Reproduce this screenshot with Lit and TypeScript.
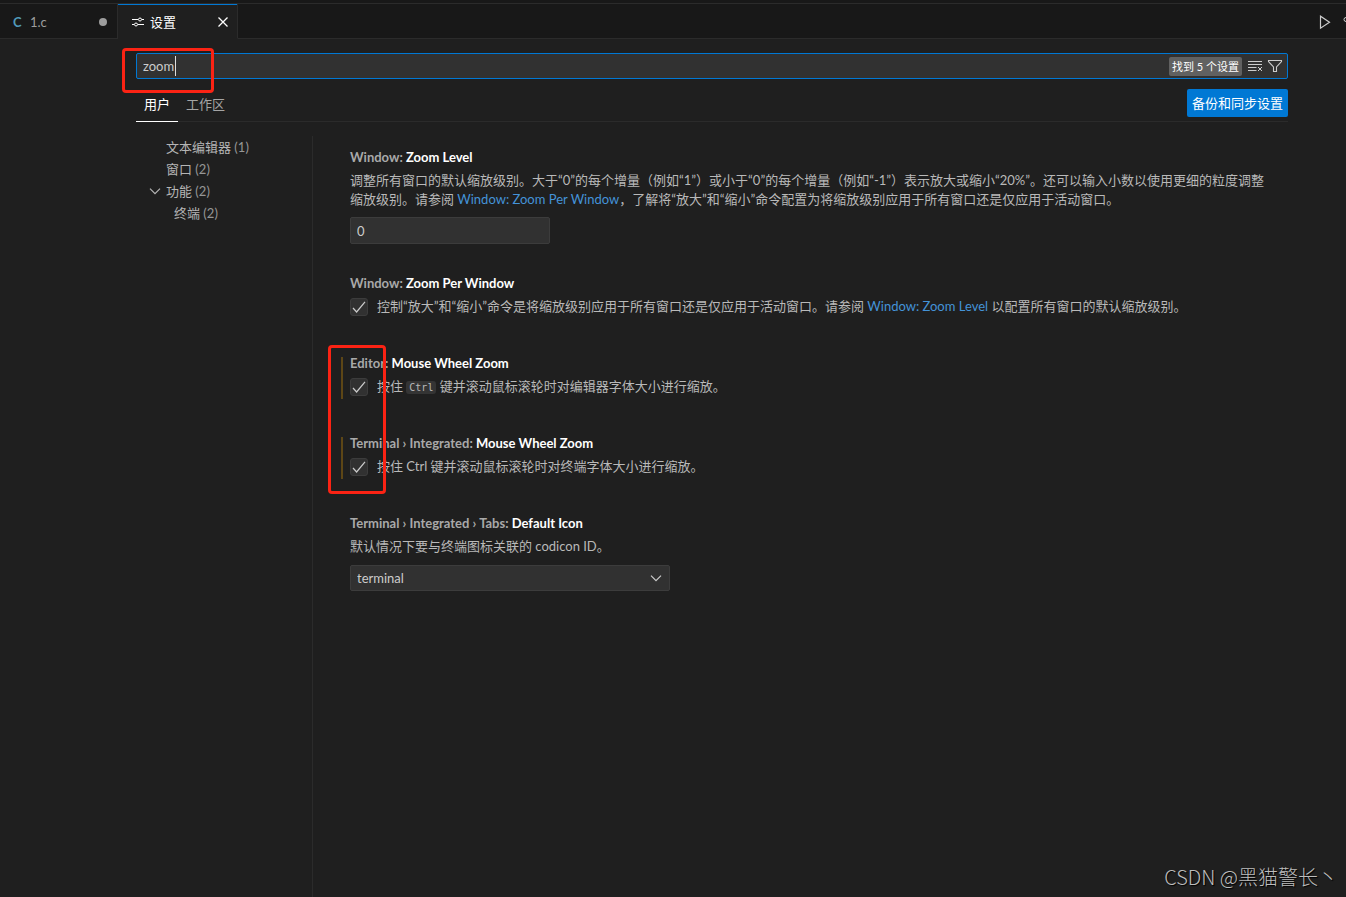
import { LitElement, html, css, svg, nothing, TemplateResult } from "lit";
import { customElement } from "lit/decorators.js";
import { classMap } from "lit/directives/class-map.js";

interface Setting {
  id: string;
  category: string;
  name: string;
  description: TemplateResult;
  kind: "number" | "check" | "select";
  value?: string;
  modified?: boolean;
}

interface TocEntry {
  label: string;
  count: number;
  level: number;
  expanded?: boolean;
}

const TOC: TocEntry[] = [
  { label: "文本编辑器", count: 1, level: 1 },
  { label: "窗口", count: 2, level: 1 },
  { label: "功能", count: 2, level: 1, expanded: true },
  { label: "终端", count: 2, level: 2 },
];

const SETTINGS: Setting[] = [
  {
    id: "zoom-level",
    category: "Window:",
    name: "Zoom Level",
    description: html`调整所有窗口的默认缩放级别。大于“0”的每个增量（例如“1”）或小于“0”的每个增量（例如“-1”）表示放大或缩小“20%”。还可以输入小数以使用更细的粒度调整缩放级别。请参阅 <a href="#zoom-per-window">Window: Zoom Per Window</a>，了解将“放大”和“缩小”命令配置为将缩放级别应用于所有窗口还是仅应用于活动窗口。`,
    kind: "number",
    value: "0",
  },
  {
    id: "zoom-per-window",
    category: "Window:",
    name: "Zoom Per Window",
    description: html`控制“放大”和“缩小”命令是将缩放级别应用于所有窗口还是仅应用于活动窗口。请参阅 <a href="#zoom-level">Window: Zoom Level</a> 以配置所有窗口的默认缩放级别。`,
    kind: "check",
  },
  {
    id: "editor-wheel",
    category: "Editor:",
    name: "Mouse Wheel Zoom",
    description: html`按住 <code>Ctrl</code> 键并滚动鼠标滚轮时对编辑器字体大小进行缩放。`,
    kind: "check",
    modified: true,
  },
  {
    id: "terminal-wheel",
    category: "Terminal › Integrated:",
    name: "Mouse Wheel Zoom",
    description: html`按住 Ctrl 键并滚动鼠标滚轮时对终端字体大小进行缩放。`,
    kind: "check",
    modified: true,
  },
  {
    id: "tabs-icon",
    category: "Terminal › Integrated › Tabs:",
    name: "Default Icon",
    description: html`默认情况下要与终端图标关联的 codicon ID。`,
    kind: "select",
    value: "terminal",
  },
];

const icon = (body: TemplateResult, cls = "") =>
  html`<svg class="icon ${cls}" viewBox="0 0 16 16" width="16" height="16" aria-hidden="true">${body}</svg>`;

const chevron = svg`<path d="M3 5.7 8 10.7 13 5.7" />`;
const check = svg`<path d="M2 9 5.6 13 14 2.8" />`;

@customElement("settings-tabs")
class SettingsTabs extends LitElement {
  static styles = css`
    :host {
      display: flex;
      height: 36px;
      box-sizing: border-box;
      background: #181818;
      border-top: 1px solid #2b2b2b;
    }
    .tab {
      display: flex;
      align-items: center;
      box-sizing: border-box;
      border-right: 1px solid #2b2b2b;
      border-bottom: 1px solid #2b2b2b;
      color: #9d9d9d;
    }
    .file {
      width: 118px;
      padding: 1px 5px 0 13px;
    }
    .lang {
      width: 17px;
      color: #519aba;
      font-weight: 700;
    }
    .active {
      width: 120px;
      padding: 1px 6px 0 12px;
      gap: 4px;
      background: #1f1f1f;
      border-bottom-color: #1f1f1f;
      color: #fff;
      box-shadow: inset 0 1px #0078d4;
    }
    .label {
      flex: 1;
    }
    .rest {
      flex: 1;
      display: flex;
      align-items: center;
      justify-content: flex-end;
      gap: 10px;
      padding-top: 1px;
      border-bottom: 1px solid #2b2b2b;
      overflow: hidden;
    }
    button {
      display: flex;
      padding: 0;
      border: 0;
      background: none;
      color: inherit;
      font: inherit;
    }
    .tool {
      color: #ccc;
    }
    .cut {
      width: 4px;
      overflow: hidden;
    }
    .icon {
      flex: none;
      fill: none;
      stroke: currentColor;
    }
  `;

  render() {
    return html`
      <div class="tab file">
        <span class="lang">C</span><span class="label">1.c</span>
        <button aria-label="关闭 1.c">
          ${icon(svg`<circle cx="7" cy="8" r="4" fill="currentColor" stroke="none" />`)}
        </button>
      </div>
      <div class="tab active">
        ${icon(svg`<path d="M2 5.5h6M12 5.5h2M2 10.5h2M8 10.5h6" stroke-width="1.2" /><circle cx="10" cy="5.5" r="1.5" /><circle cx="6" cy="10.5" r="1.5" />`)}
        <span class="label">设置</span>
        <button aria-label="关闭 设置">
          ${icon(svg`<path d="M3.5 3.5 12.5 12.5M12.5 3.5 3.5 12.5" stroke-width="1.3" />`)}
        </button>
      </div>
      <div class="rest">
        <button class="tool" aria-label="运行">
          ${icon(svg`<path d="M4.5 2.2v12L13.5 8.2z" stroke-width="1.2" />`)}
        </button>
        <button class="tool cut" aria-label="更多">
          ${icon(svg`<circle cx="4" cy="5.5" r="2" />`)}
        </button>
      </div>
    `;
  }
}

@customElement("setting-item")
class SettingItem extends LitElement {
  static properties = { setting: { attribute: false } };
  declare setting: Setting;

  static styles = css`
    :host {
      display: block;
    }
    .item {
      position: relative;
      padding: 12px 0 18px;
    }
    .modified::before {
      content: "";
      position: absolute;
      left: -9px;
      top: 15px;
      width: 2px;
      height: 42px;
      background: #5d4616;
    }
    h3 {
      margin: 0 0 5px;
      font-size: 13px;
      font-weight: 700;
      line-height: 18px;
      color: #fff;
    }
    .category {
      color: #a9a9a9;
    }
    .description {
      line-height: 19px;
      color: #b9b9b9;
    }
    a {
      color: #4493d8;
      text-decoration: none;
    }
    code {
      padding: 1px 3px;
      border-radius: 3px;
      background: #343434;
      font-family: "DejaVu Sans Mono", monospace;
      font-size: 10px;
    }
    .row {
      display: flex;
      gap: 9px;
      min-height: 27px;
    }
    .box,
    .drop {
      display: grid;
      flex: none;
    }
    .box > *,
    .drop > * {
      grid-area: 1 / 1;
    }
    .box {
      width: 18px;
      height: 18px;
      margin-top: 1px;
      place-items: center;
    }
    .tick {
      appearance: none;
      width: 18px;
      height: 18px;
      margin: 0;
      box-sizing: border-box;
      border: 1px solid #3c3c3c;
      border-radius: 3px;
      background: #313131;
    }
    .field {
      box-sizing: border-box;
      border: 1px solid #3c3c3c;
      border-radius: 2px;
      background: #313131;
      color: #ccc;
      font: inherit;
      padding: 0 6px;
      appearance: none;
      outline: none;
    }
    .number {
      display: block;
      width: 200px;
      height: 27px;
      margin-top: 8px;
    }
    .drop {
      width: 320px;
      margin-top: 9px;
      align-items: center;
      justify-items: end;
    }
    .select {
      width: 100%;
      height: 26px;
      padding-bottom: 1px;
    }
    .icon {
      fill: none;
      stroke: #ccc;
      stroke-width: 1.2;
      pointer-events: none;
    }
    .arrow {
      margin-right: 6px;
    }
  `;

  private body() {
    const s = this.setting;
    if (s.kind === "check") {
      return html`<div class="row">
        <span class="box">
          <input class="tick" id="control" type="checkbox" checked />
          ${icon(check)}
        </span>
        <label class="description" for="control">${s.description}</label>
      </div>`;
    }
    return html`
      <div class="description">${s.description}</div>
      ${s.kind === "number"
        ? html`<input class="field number" type="text" inputmode="numeric" aria-labelledby="title" .value=${s.value ?? ""} />`
        : html`<div class="drop">
            <select class="field select" aria-labelledby="title">
              <option>${s.value}</option>
            </select>
            ${icon(chevron, "arrow")}
          </div>`}
    `;
  }

  render() {
    const s = this.setting;
    return html`<section class=${classMap({ item: true, modified: !!s.modified })}>
      <h3 id="title"><span class="category">${s.category}</span> ${s.name}</h3>
      ${this.body()}
    </section>`;
  }
}

@customElement("app-root")
class AppRoot extends LitElement {
  static styles = css`
    :host {
      display: flex;
      flex-direction: column;
      position: relative;
      min-height: 100vh;
      box-sizing: border-box;
      padding-top: 3px;
      background: linear-gradient(#181818 3px, #1f1f1f 3px);
      color: #ccc;
      font: 13px/18px Lato, "Noto Sans CJK SC", sans-serif;
      overflow: hidden;
    }
    .editor {
      flex: 1;
      display: flex;
      flex-direction: column;
      padding: 14px 58px 0 136px;
    }
    .search {
      position: relative;
      display: flex;
      align-items: center;
      box-sizing: border-box;
      height: 26px;
      padding: 0 4px 0 6px;
      gap: 4px;
      border: 1px solid #0078d4;
      border-radius: 2px;
      background: #313131;
    }
    .query {
      flex: 1;
      min-width: 0;
      padding: 0;
      border: 0;
      outline: none;
      background: none;
      color: #ccc;
      font: inherit;
    }
    .caret {
      position: absolute;
      left: 38px;
      top: 2px;
      width: 1px;
      height: 20px;
      background: #ddd;
    }
    .found {
      padding: 0 3px;
      margin-right: 1px;
      border-radius: 2px;
      background: #616161;
      color: #fff;
      font-size: 11px;
      line-height: 19px;
    }
    button {
      padding: 0;
      border: 0;
      background: none;
      color: inherit;
      font: inherit;
    }
    .action {
      display: flex;
    }
    .icon {
      fill: none;
      stroke: currentColor;
      stroke-width: 1.2;
    }
    .header {
      display: flex;
      align-items: flex-end;
      justify-content: space-between;
      height: 42px;
      border-bottom: 1px solid #2b2b2b;
    }
    .scopes {
      display: flex;
      margin-bottom: -1px;
    }
    .scope {
      padding: 0 8px 8px;
      border-bottom: 1px solid transparent;
      color: #a5a5a5;
    }
    .current {
      border-bottom-color: #fff;
      color: #fff;
    }
    .sync {
      height: 28px;
      margin-bottom: 4px;
      padding: 0 5px;
      border-radius: 2px;
      background: #0078d4;
      color: #fff;
    }
    .body {
      flex: 1;
      display: grid;
      grid-template-columns: 176px minmax(0, 1fr);
      margin-top: 14px;
    }
    .toc {
      margin: 0;
      padding: 0;
      list-style: none;
    }
    .entry {
      display: grid;
      grid-template-columns: 16px 1fr;
      align-items: center;
      gap: 3px;
      height: 22px;
      padding-left: 11px;
      color: #b5b5b5;
    }
    .nested {
      padding-left: 19px;
    }
    .count {
      color: #969696;
    }
    .settings {
      padding: 0 22px 0 37px;
      border-left: 1px solid #2b2b2b;
    }
    .mark {
      position: absolute;
      box-sizing: border-box;
      border: 3px solid #fb2314;
      border-radius: 4px;
      pointer-events: none;
    }
    .mark-search {
      left: 122px;
      top: 48px;
      width: 92px;
      height: 45px;
    }
    .mark-checks {
      left: 328px;
      top: 345px;
      width: 58px;
      height: 149px;
    }
    .watermark {
      position: absolute;
      right: 8px;
      bottom: 6px;
      color: #bdbdbd;
      font: 20px/28px "Noto Sans CJK SC", sans-serif;
      font-weight: 300;
      text-shadow: 1px 1px 1px #000;
    }
  `;

  render() {
    return html`
      <settings-tabs></settings-tabs>
      <main class="editor" lang="zh-CN">
        <div class="search">
          <input class="query" type="text" aria-label="搜索设置" .value=${"zoom"} />
          <span class="caret"></span>
          <span class="found">找到 5 个设置</span>
          <button class="action" aria-label="清除搜索">
            ${icon(svg`<path d="M1 3.5h14M1 6.5h14M1 9.5h8.5M1 12.5h8.5M11 9l4 4M15 9l-4 4" stroke-width="1" />`)}
          </button>
          <button class="action" aria-label="筛选">
            ${icon(svg`<path d="M1.5 2.5h13v1L9.5 9v4.5h-3V9l-5-5.5z" stroke-width="1.1" />`)}
          </button>
        </div>
        <div class="header">
          <nav class="scopes">
            <button class="scope current">用户</button>
            <button class="scope">工作区</button>
          </nav>
          <button class="sync">备份和同步设置</button>
        </div>
        <div class="body">
          <ul class="toc">
            ${TOC.map(
              (t) => html`<li class=${classMap({ entry: true, nested: t.level > 1 })}>
                <span class="action">${t.expanded ? icon(chevron) : nothing}</span>
                <span>${t.label} <span class="count">(${t.count})</span></span>
              </li>`
            )}
          </ul>
          <div class="settings">
            ${SETTINGS.map((s) => html`<setting-item id=${s.id} .setting=${s}></setting-item>`)}
          </div>
        </div>
      </main>
      <div class="mark mark-search"></div>
      <div class="mark mark-checks"></div>
      <div class="watermark" lang="zh-CN">CSDN @黑猫警长丶</div>
    `;
  }
}
